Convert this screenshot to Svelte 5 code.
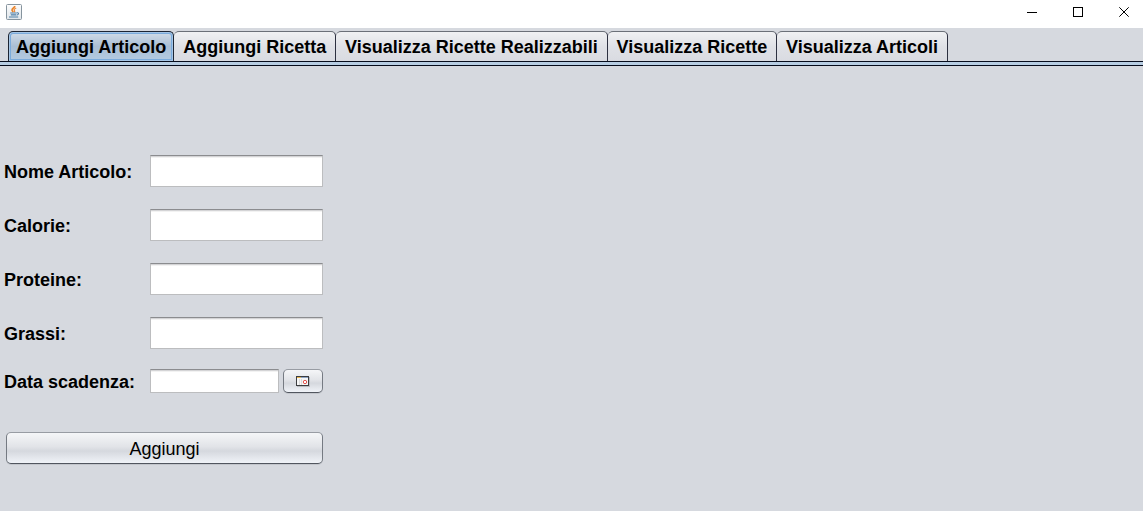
<script>
  const tabs = [
    'Aggiungi Articolo',
    'Aggiungi Ricetta',
    'Visualizza Ricette Realizzabili',
    'Visualizza Ricette',
    'Visualizza Articoli'
  ];
  let active = $state(0);

  const fields = [
    { id: 'nome', label: 'Nome Articolo:' },
    { id: 'calorie', label: 'Calorie:' },
    { id: 'proteine', label: 'Proteine:' },
    { id: 'grassi', label: 'Grassi:' }
  ];
</script>

<div class="window">
  <header class="titlebar">
    <svg class="app-icon" width="16" height="16" viewBox="0 0 16 16" aria-hidden="true">
      <defs>
        <linearGradient id="tile" x1="0" y1="0" x2="0" y2="1">
          <stop offset="0" stop-color="#fdfdfd" />
          <stop offset="1" stop-color="#dfe5ea" />
        </linearGradient>
      </defs>
      <rect x="0.5" y="0.5" width="15" height="15" rx="1" fill="url(#tile)" stroke="#86949e" />
      <path d="M8.800 2C9 3.600 5.600 4.300 6 6.200c.1.900.9 1.300 1.300 2" fill="none" stroke="#e8832a" stroke-width="1.600" />
      <path d="M10.200 4C8.500 4.800 7.500 5.500 8.400 6.600c.5.6.3 1-.3 1.500" fill="none" stroke="#ee8a38" stroke-width="1.300" />
      <path d="M4.200 9h6.500M4.800 10.900h5.400M3 13h9.200" fill="none" stroke="#4d7ea6" stroke-width="1.200" />
      <path d="M10.800 8.800c2.300-.5 2.300 1.800-.1 2.500" fill="none" stroke="#4d7ea6" stroke-width="1.100" />
    </svg>
    <div class="controls">
      <button type="button" aria-label="Riduci a icona">
        <svg width="11" height="11" viewBox="0 0 11 11" shape-rendering="crispEdges"><path d="M0 5.500h10" stroke="#000" fill="none" /></svg>
      </button>
      <button type="button" aria-label="Ingrandisci">
        <svg width="11" height="11" viewBox="0 0 11 11" shape-rendering="crispEdges"><rect x="0.5" y="0.5" width="9" height="9" stroke="#000" fill="none" /></svg>
      </button>
      <button type="button" aria-label="Chiudi">
        <svg width="11" height="11" viewBox="0 0 11 11"><path d="M0.300 0.300l9.400 9.400M9.700 0.300L0.300 9.700" stroke="#000" fill="none" /></svg>
      </button>
    </div>
  </header>

  <div class="tabs" role="tablist">
    {#each tabs as tab, i}
      <button
        type="button"
        role="tab"
        class="tab"
        class:selected={active === i}
        aria-selected={active === i}
        onclick={() => (active = i)}>{tab}</button>
    {/each}
  </div>
  <div class="strip"></div>

  <form class="panel" onsubmit={(e) => e.preventDefault()}>
    {#each fields as f}
      <div class="row">
        <label for={f.id}>{f.label}</label>
        <input id={f.id} type="text" />
      </div>
    {/each}
    <div class="row date">
      <label for="scadenza">Data scadenza:</label>
      <input id="scadenza" type="text" />
      <button type="button" class="push" aria-label="Scegli data">
        <svg width="14" height="11" viewBox="0 0 14 11" shape-rendering="crispEdges">
          <path d="M1 10.500h13M13.500 1v9" stroke="#b9bbc0" fill="none" />
          <rect x="0.500" y="0.500" width="12" height="9" fill="#f6f6f6" stroke="#3c3d40" />
          <rect x="1" y="1" width="4" height="1" fill="#e9b54c" />
          <rect x="5" y="1" width="7" height="1" fill="#8ea4c4" />
          <path d="M3.500 3v6M5.500 3v6" stroke="#dcdcdc" />
          <circle cx="9" cy="6" r="1.700" fill="#fff" stroke="#e2504c" shape-rendering="auto" />
        </svg>
      </button>
    </div>
    <button type="submit" class="push submit">Aggiungi</button>
  </form>
</div>

<style>
  :global(body) {
    background: #d6d9df;
  }

  .window {
    min-height: 100vh;
    background: #d6d9df;
    color: #000;
    font: 18px/22px 'Liberation Sans', Arial, sans-serif;
  }

  button,
  input {
    box-sizing: border-box;
    margin: 0;
    font: inherit;
    color: inherit;
  }

  .titlebar {
    display: flex;
    justify-content: space-between;
    height: 28px;
    padding-left: 6px;
    background: #fff;
  }

  .app-icon {
    margin-top: 4px;
  }

  .controls {
    display: flex;
  }

  .controls button {
    width: 46px;
    height: 24px;
    padding: 0 0 0 8px;
    border: 0;
    background: none;
    display: flex;
    align-items: center;
    justify-content: center;
  }

  .controls svg {
    display: block;
  }

  .tabs {
    display: flex;
    max-width: 940px;
    padding: 3px 8px 0;
  }

  .tab {
    flex: 1 0 auto;
    height: 30px;
    padding: 0 7px;
    border: 1px solid #6b7078;
    border-color: #6b7078 #2c3040 transparent transparent;
    border-width: 1px 1px 0 0;
    border-radius: 5px 5px 0 0;
    background: linear-gradient(#f0f1f3, #dfe1e6 50%, #d9dbe1);
    font-weight: bold;
    white-space: nowrap;
  }

  .tab.selected {
    flex-grow: 0;
    border: 1px solid #1c2533;
    border-bottom: 0;
    background: linear-gradient(#d3dde8, #a9bed4 50%, #b3cbe2);
    box-shadow: inset 0 0 0 1px #a6c6e6, inset 0 0 0 2px #7aabdc;
  }

  .strip {
    height: 3px;
    border: solid #060c1c;
    border-width: 1px 0;
    background: #b7cde2;
  }

  .panel {
    display: flex;
    flex-direction: column;
    gap: 22px;
    width: 319px;
    padding: 89px 4px 16px;
  }

  .row {
    display: grid;
    grid-template-columns: 146px 1fr;
    align-items: center;
  }

  .row label {
    font-weight: bold;
    white-space: nowrap;
    padding-top: 2px;
  }

  input {
    width: 100%;
    height: 32px;
    padding: 0 6px;
    border: 1px solid #bcbdbf;
    border-top-color: #8b8c8f;
    background: #fff;
    box-shadow: inset 0 1px 0 #d4d4d6, inset 0 2px 0 #f2f2f2;
  }

  .date {
    grid-template-columns: 146px 1fr 40px;
    margin-top: -2px;
  }

  .date input {
    width: calc(100% - 4px);
    height: 24px;
  }

  .push {
    display: flex;
    align-items: center;
    justify-content: center;
    height: 24px;
    padding: 0;
    border: 1px solid #7a7e87;
    border-color: #989ca3 #757a82 #51565f;
    border-radius: 5px;
    background: linear-gradient(#f5f6f8, #e2e4e8 45%, #d5d8de 60%, #f0f3f8);
    box-shadow: 0 1px 0 #c3c6cc;
  }

  .submit {
    height: 32px;
    margin: 17px 0 0 2px;
    padding-top: 2px;
  }
</style>
